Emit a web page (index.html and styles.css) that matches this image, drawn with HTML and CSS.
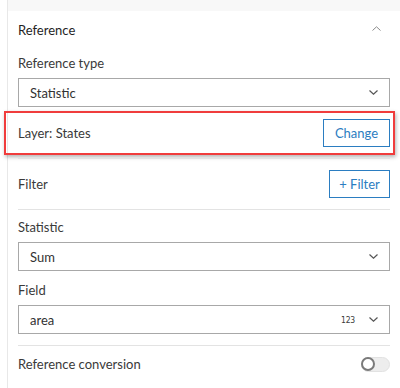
FILE: index.html
```html
<!DOCTYPE html>
<html lang="en">
<head>
<meta charset="utf-8">
<title>Reference settings</title>
<link rel="stylesheet" href="styles.css">
</head>
<body>
<div class="panel">
  <div class="band"></div>
  <div class="content">
    <div class="section-head">
      <span class="section-title">Reference</span>
      <svg class="chev chev-up" width="9" height="5" viewBox="0 0 9 5"><path d="M0.5 4.5 L4.5 0.8 L8.5 4.5" fill="none" stroke="#8a8a8a" stroke-width="1"/></svg>
    </div>

    <div class="label label-first">Reference type</div>
    <div class="select">
      <span>Statistic</span>
      <svg class="chev" width="9" height="5" viewBox="0 0 9 5"><path d="M0.5 0.5 L4.5 4.2 L8.5 0.5" fill="none" stroke="#555" stroke-width="1.2"/></svg>
    </div>

    <div class="highlight">
      <span class="row-text">Layer: States</span>
      <button class="btn btn-change">Change</button>
    </div>

    <div class="divider divider-a"></div>

    <div class="filter-row">
      <span class="row-text">Filter</span>
      <button class="btn btn-filter">+ Filter</button>
    </div>

    <div class="divider"></div>

    <div class="label label-stat">Statistic</div>
    <div class="select">
      <span>Sum</span>
      <svg class="chev" width="9" height="5" viewBox="0 0 9 5"><path d="M0.5 0.5 L4.5 4.2 L8.5 0.5" fill="none" stroke="#555" stroke-width="1.2"/></svg>
    </div>

    <div class="label label-field">Field</div>
    <div class="select">
      <span>area</span>
      <span class="select-right">
        <span class="num-icon">123</span>
        <svg class="chev" width="9" height="5" viewBox="0 0 9 5"><path d="M0.5 0.5 L4.5 4.2 L8.5 0.5" fill="none" stroke="#555" stroke-width="1.2"/></svg>
      </span>
    </div>

    <div class="divider divider-b"></div>

    <div class="toggle-row">
      <span class="row-text">Reference conversion</span>
      <span class="toggle"><span class="knob"></span></span>
    </div>
  </div>
</div>
</body>
</html>
```

FILE: styles.css
```css
html, body {
  margin: 0;
  padding: 0;
  background: #ffffff;
}

body {
  font-family: "Lato", "Liberation Sans", sans-serif;
  font-size: 13px;
  color: #3a3a3a;
}

.panel {
  margin-left: 7px;
  border-left: 1px solid #e8e8e8;
  height: 388px;
  box-sizing: border-box;
}

.band {
  height: 11px;
  background: #f8f8f8;
}

.content {
  padding: 0 10px 0 10px;
}

.section-head {
  height: 37px;
  display: flex;
  align-items: center;
  justify-content: space-between;
  padding-right: 9px;
}

.section-title {
  font-size: 13px;
  color: #1f1f1f;
}

.chev-up {
  margin-top: -2px;
}

.label {
  line-height: 20px;
  color: #3a3a3a;
}

.label-first {
  margin-top: 5px;
  margin-bottom: 5px;
}

.label-stat {
  margin-top: 7px;
  margin-bottom: 5px;
}

.label-field {
  margin-top: 9px;
  margin-bottom: 5px;
}

.select {
  height: 29px;
  box-sizing: border-box;
  border: 1px solid #a8a8a8;
  display: flex;
  align-items: center;
  justify-content: space-between;
  padding: 0 11px 0 11px;
  color: #323232;
}

.select-right {
  display: flex;
  align-items: center;
  gap: 14px;
}

.num-icon {
  font-family: "DejaVu Sans Condensed", "DejaVu Sans", sans-serif;
  font-size: 8.5px;
  color: #3a3a3a;
  letter-spacing: -0.2px;
}

.highlight {
  margin: 4px -5px 0 -14px;
  height: 44px;
  box-sizing: border-box;
  border: 2px solid #f03c3c;
  box-shadow: 1px 2px 4px rgba(0, 0, 0, 0.3);
  display: flex;
  align-items: center;
  justify-content: space-between;
  padding: 0 3px 0 12px;
}

.row-text {
  color: #3a3a3a;
}

.btn {
  font-family: inherit;
  font-size: 13px;
  color: #2b7dc1;
  background: #ffffff;
  border: 1px solid #2b7dc1;
  height: 28px;
  box-sizing: border-box;
  padding: 0;
  cursor: pointer;
}

.btn-change {
  width: 67px;
}

.btn-filter {
  width: 61px;
}

.divider {
  height: 1px;
  background: #e3e3e3;
}

.divider-a {
  margin-top: 3px;
}

.filter-row {
  display: flex;
  align-items: center;
  justify-content: space-between;
  padding: 11px 0 11px 0;
}

.divider-b {
  margin-top: 11px;
}

.toggle-row {
  height: 36px;
  display: flex;
  align-items: center;
  justify-content: space-between;
}

.toggle {
  width: 29px;
  height: 15px;
  border-radius: 8px;
  background: #ededed;
  box-sizing: border-box;
  border: 1px solid #e2e2e2;
  display: flex;
  align-items: center;
}

.knob {
  width: 14px;
  height: 14px;
  border-radius: 50%;
  box-sizing: border-box;
  border: 2px solid #7a7a7a;
  background: #ffffff;
  margin-left: -1px;
}
```
